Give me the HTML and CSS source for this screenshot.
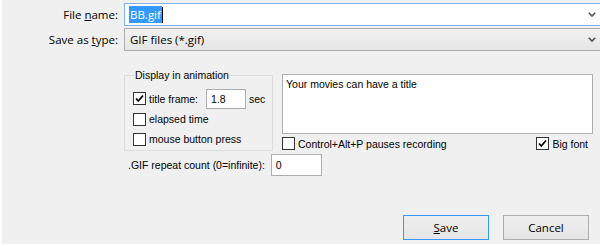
FILE: index.html
```html
<!DOCTYPE html>
<html>
<head>
<meta charset="utf-8">
<link rel="stylesheet" href="styles.css">
</head>
<body>
<div class="panel">
  <div class="field-row">
    <label class="flabel">File <u>n</u>ame:</label>
    <div class="input focus">
      <span class="sel">BB.gif</span><span class="caret"></span>
      <svg class="chev" width="8" height="5" viewBox="0 0 8 5"><path d="M0.8 0.8 L4 4 L7.2 0.8" fill="none" stroke="#505050" stroke-width="1.6"/></svg>
    </div>
  </div>
  <div class="field-row r2">
    <label class="flabel">Save as <u>t</u>ype:</label>
    <div class="input combo">
      <span class="ctext">GIF files (*.gif)</span>
      <svg class="chev" width="8" height="5" viewBox="0 0 8 5"><path d="M0.8 0.8 L4 4 L7.2 0.8" fill="none" stroke="#505050" stroke-width="1.6"/></svg>
    </div>
  </div>

  <div class="options">
    <div class="group">
      <div class="legend">Display in animation</div>
      <div class="cb-row first">
        <span class="cb"><svg width="11" height="11" viewBox="0 0 11 11"><path d="M2 5.5 L4.3 8 L9 2.5" fill="none" stroke="#000" stroke-width="1.8"/></svg></span>
        <span class="cb-label">title frame:</span>
        <span class="num">1.8</span>
        <span class="unit">sec</span>
      </div>
      <div class="cb-row">
        <span class="cb"></span>
        <span class="cb-label">elapsed time</span>
      </div>
      <div class="cb-row">
        <span class="cb"></span>
        <span class="cb-label">mouse button press</span>
      </div>
    </div>
    <div class="title-col">
      <div class="textarea">Your movies can have a title</div>
      <div class="cb-line">
        <div class="cb-item"><span class="cb"></span><span class="cb-label">Control+Alt+P pauses recording</span></div>
        <div class="cb-item"><span class="cb"><svg width="11" height="11" viewBox="0 0 11 11"><path d="M2 5.5 L4.3 8 L9 2.5" fill="none" stroke="#000" stroke-width="1.8"/></svg></span><span class="cb-label">Big font</span></div>
      </div>
    </div>
  </div>

  <div class="repeat-row">
    <span class="rlabel">.GIF repeat count (0=infinite):</span>
    <span class="num wide">0</span>
  </div>

  <div class="buttons">
    <button class="btn default"><u>S</u>ave</button>
    <button class="btn">Cancel</button>
  </div>
</div>
</body>
</html>
```

FILE: styles.css
```css
html, body {
  margin: 0;
  padding: 0;
  background: #ffffff;
}

.panel {
  margin-left: 2px;
  width: 598px;
  height: 244px;
  background: #f0f0f0;
  padding-top: 3px;
  box-sizing: border-box;
  font-family: "Liberation Sans", Arial, sans-serif;
  font-size: 10.5px;
  color: #000;
  overflow: hidden;
}

.field-row {
  display: grid;
  grid-template-columns: 122px 476px;
  height: 23px;
  align-items: center;
  font-family: "Open Sans", "Liberation Sans", sans-serif;
  font-size: 11.5px;
}

.field-row.r2 {
  margin-top: 2px;
}

.flabel {
  text-align: right;
  padding-right: 6px;
  color: #000;
}

.input {
  height: 23px;
  box-sizing: border-box;
  border: 1px solid #7eb4ea;
  border-right: none;
  background: #fff;
  display: flex;
  align-items: center;
  padding-left: 4px;
}

.combo {
  border-color: #acacac;
  background: linear-gradient(#f2f2f2, #e5e5e5);
}

.sel {
  background: #3399ff;
  color: #fff;
  line-height: 17px;
  padding: 0 1px;
}

.caret {
  display: inline-block;
  width: 1px;
  height: 16px;
  background: #000;
}

.ctext {
  padding-left: 1px;
}

.chev {
  margin-left: auto;
  margin-right: 4px;
}

.options {
  display: flex;
  margin-left: 122px;
  margin-top: 23px;
  align-items: flex-start;
}

.group {
  width: 149px;
  height: 76px;
  margin-top: 1px;
  box-sizing: border-box;
  border: 1px solid #dcdcdc;
  padding-left: 8px;
}

.legend {
  margin-top: -7px;
  margin-left: 1px;
  width: fit-content;
  padding: 0 1px;
  background: #f0f0f0;
  line-height: 13px;
}

.cb-row {
  display: flex;
  align-items: center;
  height: 20px;
}

.cb-row.first {
  margin-top: 6px;
  height: 21px;
}

.cb {
  width: 13px;
  height: 13px;
  box-sizing: border-box;
  border: 1px solid #333;
  background: #fff;
  display: flex;
  align-items: center;
  justify-content: center;
  flex: none;
}

.cb-label {
  margin-left: 3px;
  white-space: nowrap;
}

.num {
  display: flex;
  align-items: center;
  box-sizing: border-box;
  width: 40px;
  height: 20px;
  border: 1px solid #abadb3;
  background: #fff;
  padding-left: 4px;
  margin-left: 8px;
}

.unit {
  margin-left: 3px;
}

.title-col {
  margin-left: 9px;
  width: 311px;
}

.textarea {
  height: 60px;
  box-sizing: border-box;
  border: 1px solid #abadb3;
  background: #fff;
  padding: 3px 3px;
  line-height: 13px;
}

.cb-line {
  display: flex;
  justify-content: space-between;
  align-items: center;
  margin-top: 3px;
  padding-right: 5px;
}

.cb-item {
  display: flex;
  align-items: center;
}

.repeat-row {
  display: flex;
  align-items: center;
  margin-left: 126px;
  margin-top: 3px;
  height: 22px;
}

.num.wide {
  width: 51px;
  height: 22px;
  margin-left: 6px;
}

.buttons {
  display: flex;
  justify-content: flex-end;
  gap: 14px;
  margin-top: 39px;
  padding-right: 11px;
}

.btn {
  width: 86px;
  height: 25px;
  box-sizing: border-box;
  border: 1px solid #adadad;
  background: linear-gradient(#efefef, #e5e5e5);
  font-family: "Open Sans", "Liberation Sans", sans-serif;
  font-size: 11.5px;
  color: #000;
  padding: 0;
  margin: 0;
}

.btn.default {
  border-color: #3399ff;
}
```
